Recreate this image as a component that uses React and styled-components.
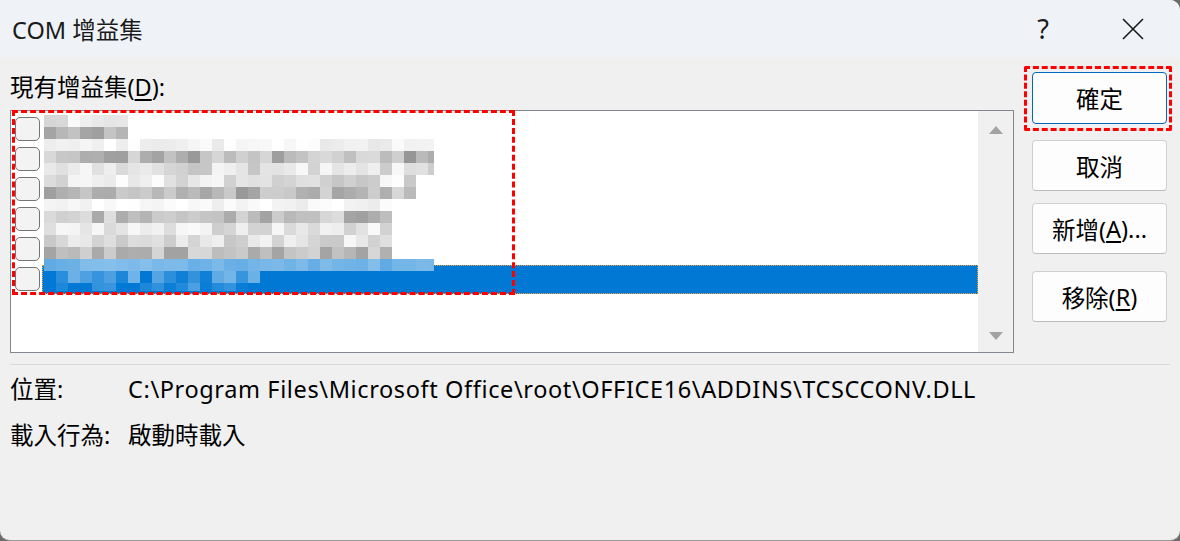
import React from 'react'
import styled, { createGlobalStyle } from 'styled-components'

const GlobalStyle = createGlobalStyle`
  html, body {
    margin: 0;
    padding: 0;
    background: #6b6b6b;
  }
  body {
    font-family: "Noto Sans", "Noto Sans CJK TC", sans-serif;
    color: #000;
  }
`;

const Window = styled.div`
  width: 1180px;
  height: 540px;
  background: #f0f0f0;
  border-radius: 0 10px 10px 10px;
  border-bottom: 1px solid #9a9a9a;
  overflow: hidden;
  display: flex;
  flex-direction: column;
`;

const TitleBar = styled.div`
  height: 57px;
  background: #eff3f8;
  display: flex;
  align-items: center;
  padding-left: 12px;
`;

const Title = styled.div`
  flex: 1;
  font-size: 23.5px;
  color: #1a1a1a;
`;

const TitleButton = styled.div`
  width: ${p => p.$w}px;
  height: 57px;
  display: flex;
  align-items: center;
  justify-content: center;
  font-size: 27px;
  color: #1a1a1a;
`;

const Body = styled.div`
  flex: 1;
  padding: 15px 10px 0 10px;
`;

const TopSection = styled.div`
  display: flex;
  gap: 18px;
`;

const LeftColumn = styled.div`
  width: 1004px;
`;

const Label = styled.div`
  font-size: 23.5px;
  line-height: 30px;
  margin-bottom: 8px;
`;

const Key = styled.span`
  text-decoration: underline;
  text-decoration-thickness: 1.5px;
  text-underline-offset: 3px;
`;

const ListBox = styled.div`
  position: relative;
  height: 241px;
  border: 1px solid #828790;
  display: flex;
  background: #fff;
`;

const Items = styled.div`
  position: relative;
  flex: 1;
  padding-top: 3px;
  background: #fff;
`;

const ItemRow = styled.div`
  height: 30px;
  display: flex;
  align-items: center;
  padding-left: 4px;
`;

const Checkbox = styled.div`
  width: 23px;
  height: 22px;
  border: 1.5px solid #747474;
  border-radius: 5px;
  background: #f3f3f3;
  flex-shrink: 0;
`;

const ItemText = styled.div`
  flex: 1;
  height: 29px;
  margin-left: 2px;
  background: ${p => (p.$selected ? '#0078d4' : 'transparent')};
  outline: ${p => (p.$selected ? '1px dotted #f0a040' : 'none')};
  outline-offset: -1px;
`;

const Mosaic = styled.svg`
  position: absolute;
  left: 33px;
  top: 4px;
`;

const Scrollbar = styled.div`
  width: 35px;
  background: #f0f0f0;
  display: flex;
  flex-direction: column;
  justify-content: space-between;
  align-items: center;
  padding: 15px 0 12px;
`;

const Arrow = styled.div`
  width: 0;
  height: 0;
  border-left: 7px solid transparent;
  border-right: 7px solid transparent;
  ${p => (p.$down ? 'border-top: 8px solid #a3a3a3;' : 'border-bottom: 8px solid #a3a3a3;')}
`;

const Annotation = styled.div`
  position: absolute;
  left: 1px;
  top: -1px;
  width: 497px;
  height: 179px;
  border: 3px dashed #ff0000;
  pointer-events: none;
`;

const ButtonColumn = styled.div`
  width: 135px;
  display: flex;
  flex-direction: column;
`;

const Button = styled.div`
  position: relative;
  height: ${p => p.$h}px;
  margin-top: ${p => p.$mt}px;
  box-sizing: border-box;
  background: #fdfdfd;
  border: 1px solid ${p => (p.$default ? '#0067c0' : '#d0d0d0')};
  border-bottom-color: ${p => (p.$default ? '#0067c0' : '#bcbcbc')};
  border-radius: 4px;
  display: flex;
  align-items: center;
  justify-content: center;
  font-size: 23.5px;

  ${p => p.$marked && `
    &::after {
      content: '';
      position: absolute;
      left: -9px;
      right: -6px;
      top: -7px;
      bottom: -8px;
      border: 3px dashed #ff0000;
      border-radius: 2px;
    }
  `}
`;

const Separator = styled.div`
  height: 1px;
  background: #d9d9d9;
  margin: 11px 0 9px;
  width: 1160px;
`;

const InfoGrid = styled.div`
  display: grid;
  grid-template-columns: 118px auto;
  row-gap: 15px;
  font-size: 23.5px;
  line-height: 31px;
`;

const Path = styled.div`
  letter-spacing: 0.62px;
`;

function mulberry32(a) {
  return function () {
    a |= 0
    a = (a + 0x6d2b79f5) | 0
    let t = Math.imul(a ^ (a >>> 15), 1 | a)
    t = (t + Math.imul(t ^ (t >>> 7), 61 | t)) ^ t
    return ((t ^ (t >>> 14)) >>> 0) / 4294967296
  }
}

// width (px from mosaic left), kind, base lightness, spread
const mosaicRows = [
  [84, 'g', 232, 18],
  [84, 'g', 180, 30],
  [390, 'g', 244, 12],
  [390, 'g', 185, 35],
  [390, 'g', 222, 25],
  [372, 'g', 226, 28],
  [372, 'g', 182, 35],
  [348, 'g', 246, 12],
  [348, 'g', 188, 35],
  [348, 'g', 228, 22],
  [348, 'g', 222, 25],
  [348, 'g', 190, 30],
  [390, 'lb', 0.45, 0.1],
  [216, 'b', 0.2, 0.25],
  [216, 'b', 0.12, 0.2],
]

const mix = (f) => {
  const r = Math.round(0 + (255 - 0) * f)
  const g = Math.round(120 + (255 - 120) * f)
  const b = Math.round(212 + (255 - 212) * f)
  return `rgb(${r},${g},${b})`
}

const Redaction = () => {
  const rnd = mulberry32(7)
  const cells = []
  mosaicRows.forEach(([w, kind, base, spread], r) => {
    const h = r === mosaicRows.length - 1 ? 8 : 12
    for (let x = 0; x < w; x += 12) {
      let fill
      if (kind === 'g') {
        const l = Math.max(140, Math.min(255, Math.round(base + (rnd() - 0.5) * 2 * spread)))
        fill = `rgb(${l},${l},${l})`
      } else {
        fill = mix(Math.max(0, Math.min(1, base + (rnd() - 0.5) * 2 * spread)))
      }
      cells.push(<rect key={`${r}-${x}`} x={x} y={r * 12} width={Math.min(12, w - x)} height={h} fill={fill} />)
    }
  })
  return (
    <Mosaic width="390" height="176" viewBox="0 0 390 176">
      {cells}
    </Mosaic>
  )
}

const CloseIcon = () => (
  <svg width="22" height="22" viewBox="0 0 22 22">
    <path d="M1 1 L21 21 M21 1 L1 21" stroke="#1a1a1a" strokeWidth="1.6" fill="none" />
  </svg>
)

const items = [0, 1, 2, 3, 4, 5]

const App = () => {
  return (
    <>
      <GlobalStyle />
      <Window>
        <TitleBar>
          <Title>COM 增益集</Title>
          <TitleButton $w={48}>?</TitleButton>
          <TitleButton $w={48} style={{ marginLeft: 42, marginRight: 23 }}>
            <CloseIcon />
          </TitleButton>
        </TitleBar>
        <Body>
          <TopSection>
            <LeftColumn>
              <Label>
                現有增益集(<Key>D</Key>):
              </Label>
              <ListBox>
                <Items>
                  {items.map(i => (
                    <ItemRow key={i}>
                      <Checkbox />
                      <ItemText $selected={i === 5} />
                    </ItemRow>
                  ))}
                  <Redaction />
                </Items>
                <Scrollbar>
                  <Arrow />
                  <Arrow $down />
                </Scrollbar>
                <Annotation />
              </ListBox>
            </LeftColumn>
            <ButtonColumn>
              <Button $default $marked $h={52} $mt={0}>確定</Button>
              <Button $h={51} $mt={16}>取消</Button>
              <Button $h={51} $mt={12}>
                新增(<Key>A</Key>)...
              </Button>
              <Button $h={51} $mt={17}>
                移除(<Key>R</Key>)
              </Button>
            </ButtonColumn>
          </TopSection>
          <Separator />
          <InfoGrid>
            <div>位置:</div>
            <Path>C:\Program Files\Microsoft Office\root\OFFICE16\ADDINS\TCSCCONV.DLL</Path>
            <div>載入行為:</div>
            <div>啟動時載入</div>
          </InfoGrid>
        </Body>
      </Window>
    </>
  )
}

export default App
